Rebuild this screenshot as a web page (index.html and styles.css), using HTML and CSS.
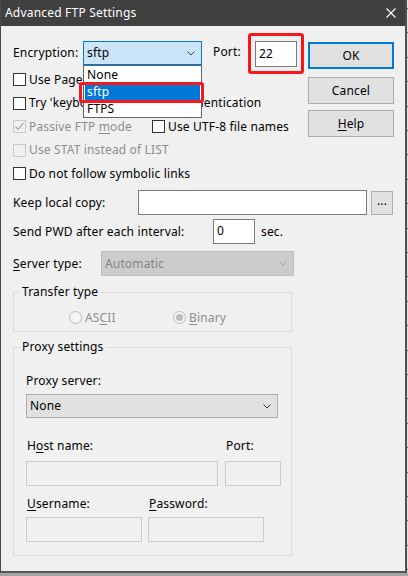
FILE: index.html
```html
<!DOCTYPE html>
<html>
<head>
<meta charset="utf-8">
<title>Advanced FTP Settings</title>
<link rel="stylesheet" href="styles.css">
</head>
<body>
<div class="screen">
  <div class="window">
    <div class="titlebar">
      <span class="title">Advanced FTP Settings</span>
      <svg class="close" width="10" height="10" viewBox="0 0 10 10"><path d="M0.5 0.5L9.5 9.5M9.5 0.5L0.5 9.5" stroke="#ffffff" stroke-width="1.1" fill="none"/></svg>
    </div>
    <div class="content">
      <div class="top">
        <div class="opts">
          <div class="row-first">
            <span class="lbl lbl-enc">Encryption:</span>
            <div class="combo combo-active">
              <span class="combo-text">sftp</span>
              <svg class="chev" width="8" height="5" viewBox="0 0 8 5"><path d="M0.5 0.5L4 4L7.5 0.5" stroke="#444" fill="none"/></svg>
              <ul class="dropdown">
                <li class="item">None</li>
                <li class="item item-sel">sftp</li>
                <li class="item">FTPS</li>
              </ul>
              <div class="mark mark-enc"></div>
            </div>
            <span class="lbl lbl-port">Port:</span>
            <div class="port-wrap">
              <div class="input input-port">22</div>
              <div class="mark mark-port"></div>
            </div>
          </div>
          <div class="cb-row"><span class="cb"></span><span class="cb-text">Use Pageant</span></div>
          <div class="cb-row"><span class="cb"></span><span class="cb-text">Try 'keyboard-interactive' authentication</span></div>
          <div class="cb-row">
            <span class="cb-item cb-item-wide">
              <span class="cb cb-dis"><svg width="11" height="11" viewBox="0 0 11 11"><path d="M1.5 5.5L4.2 8.3L9.5 2" stroke="#a8a8a8" stroke-width="1.2" fill="none"/></svg></span>
              <span class="cb-text dis">Passive FTP <u>m</u>ode</span>
            </span>
            <span class="cb-item">
              <span class="cb"></span>
              <span class="cb-text">Use UTF-8 file names</span>
            </span>
          </div>
          <div class="cb-row"><span class="cb cb-dis"></span><span class="cb-text dis">Use STAT instead of LIST</span></div>
          <div class="cb-row"><span class="cb"></span><span class="cb-text">Do not follow symbolic links</span></div>
        </div>
        <div class="buttons">
          <div class="btn btn-default">OK</div>
          <div class="btn btn-cancel">Cancel</div>
          <div class="btn btn-help"><u>H</u>elp</div>
        </div>
      </div>

      <div class="line line-keep">
        <span class="lbl lbl-keep">Keep local copy:</span>
        <div class="input input-keep"></div>
        <div class="btn-small">...</div>
      </div>

      <div class="line line-pwd">
        <span class="lbl lbl-pwd">Send PWD after each interval:</span>
        <div class="input input-pwd">0</div>
        <span class="sec">sec.</span>
      </div>

      <div class="line line-server">
        <span class="lbl lbl-server"><u>S</u>erver type:</span>
        <div class="combo combo-disabled">
          <span class="combo-text">Automatic</span>
          <svg class="chev" width="8" height="5" viewBox="0 0 8 5"><path d="M0.5 0.5L4 4L7.5 0.5" stroke="#a3a3a3" fill="none"/></svg>
        </div>
      </div>

      <div class="group group-transfer">
        <div class="legend">Transfer type</div>
        <div class="radios">
          <span class="radio-item"><span class="radio"></span><span class="dis">AS<u>C</u>II</span></span>
          <span class="radio-item"><span class="radio radio-on"><span class="dot"></span></span><span class="dis"><u>B</u>inary</span></span>
        </div>
      </div>

      <div class="group group-proxy">
        <div class="legend">Proxy settings</div>
        <div class="proxy-inner">
          <div class="plabel plabel-server">Proxy server:</div>
          <div class="combo combo-proxy">
            <span class="combo-text">None</span>
            <svg class="chev" width="8" height="5" viewBox="0 0 8 5"><path d="M0.5 0.5L4 4L7.5 0.5" stroke="#333" fill="none"/></svg>
          </div>
          <div class="pgrid pgrid-host">
            <span class="plabel">H<u>o</u>st name:</span>
            <span class="plabel">Port:</span>
            <div class="input input-dis"></div>
            <div class="input input-dis"></div>
          </div>
          <div class="pgrid pgrid-user">
            <span class="plabel"><u>U</u>sername:</span>
            <span class="plabel"><u>P</u>assword:</span>
            <div class="input input-dis"></div>
            <div class="input input-dis"></div>
          </div>
        </div>
      </div>
    </div>
  </div>
  <div class="edge"></div>
</div>
</body>
</html>
```
FILE: styles.css
```css
* { box-sizing: border-box; }

html, body {
  margin: 0;
  padding: 0;
}

body {
  width: 408px;
  height: 576px;
  overflow: hidden;
  background: #a4a4a4;
  font-family: "Noto Sans", "Liberation Sans", sans-serif;
  font-size: 12px;
  letter-spacing: 0.15px;
  color: #000;
}

u { text-underline-offset: 2px; text-decoration-thickness: 1px; }

.screen {
  display: flex;
  height: 573px;
}

.window {
  width: 405px;
  height: 573px;
  background: #f0f0f0;
  border-left: 1px solid #4a4a4a;
  border-bottom: 2px solid #565656;
  display: flex;
  flex-direction: column;
}

.edge {
  flex: 1;
  border-left: 2px solid #505050;
  background: repeating-linear-gradient(to bottom, #e2e2e2 0, #e2e2e2 8px, #5a5a5a 8px, #5a5a5a 9px, #e2e2e2 9px, #e2e2e2 24.4px);
}

.titlebar {
  height: 26px;
  background: #404040;
  display: flex;
  align-items: center;
  justify-content: space-between;
  padding: 0 9px 0 4px;
  color: #fff;
  flex-shrink: 0;
}

.title {
  font-size: 12px;
  letter-spacing: 0.2px;
  line-height: 16px;
}

.close { display: block; }

.content {
  padding: 15px 11px 0 12px;
  display: flex;
  flex-direction: column;
}

.top {
  display: flex;
  justify-content: space-between;
}

.row-first {
  display: flex;
  align-items: flex-start;
  height: 26px;
  margin-bottom: 1px;
}

.lbl { line-height: 16px; flex-shrink: 0; }
.lbl-enc { width: 70px; margin-top: 4px; }
.lbl-port { width: 42px; margin-left: 11px; margin-top: 3px; }

.combo {
  position: relative;
  display: flex;
  align-items: center;
  justify-content: space-between;
  padding: 0 6px 0 3px;
  line-height: 16px;
}

.combo-active {
  width: 119px;
  height: 24px;
  background: #cce4f7;
  border: 1px solid #0078d7;
}

.combo-disabled {
  width: 193px;
  height: 25px;
  background: #cccccc;
  border: 1px solid #bfbfbf;
  color: #838383;
}

.combo-proxy {
  width: 252px;
  height: 24px;
  background: #e1e1e1;
  border: 1px solid #adadad;
}

.chev { display: block; }

.dropdown {
  position: absolute;
  left: -1px;
  top: 23px;
  width: 119px;
  margin: 0;
  padding: 0;
  list-style: none;
  background: #fff;
  border: 1px solid #646464;
  z-index: 2;
}

.item {
  height: 17px;
  line-height: 17px;
  padding-left: 3px;
}

.item-sel {
  background: #0078d7;
  color: #fff;
  margin: 0 1px;
  padding-left: 2px;
}

.mark {
  position: absolute;
  border: 3px solid #f5191b;
  border-radius: 3px;
  z-index: 3;
}

.mark-enc {
  left: -5px;
  top: 40px;
  width: 125px;
  height: 21px;
}

.port-wrap { position: relative; }

.mark-port {
  left: -7px;
  top: -8px;
  width: 56px;
  height: 41px;
}

.input {
  background: #fff;
  border: 1px solid #7a7a7a;
  line-height: 16px;
  padding: 3px 0 0 3px;
}

.input-port { width: 42px; height: 26px; padding-top: 4px; }

.cb-row {
  height: 23.5px;
  display: flex;
  align-items: center;
}

.cb-item {
  display: flex;
  align-items: center;
}

.cb-item-wide { width: 139px; }

.cb {
  width: 13px;
  height: 13px;
  border: 1px solid #333;
  background: #fff;
  flex-shrink: 0;
  display: flex;
  align-items: center;
  justify-content: center;
}

.cb-dis {
  border-color: #cacaca;
  background: #f0f0f0;
}

.cb-text {
  margin-left: 3px;
  line-height: 16px;
  white-space: nowrap;
}

.dis { color: #8d8d8d; }

.buttons {
  display: flex;
  flex-direction: column;
  padding-top: 1px;
}

.btn {
  width: 86px;
  height: 27px;
  background: #e1e1e1;
  border: 1px solid #adadad;
  display: flex;
  align-items: center;
  justify-content: center;
  line-height: 16px;
}

.btn-default { border: 2px solid #0078d7; }
.btn-cancel { margin-top: 8px; }
.btn-help { margin-top: 6px; }

.line {
  display: flex;
  align-items: center;
}

.line-keep { margin-top: 4.5px; }
.lbl-keep { width: 125px; }
.input-keep { width: 229px; height: 25px; }

.btn-small {
  width: 22px;
  height: 24px;
  margin-left: 4px;
  background: #e1e1e1;
  border: 1px solid #adadad;
  display: flex;
  align-items: center;
  justify-content: center;
  line-height: 12px;
  padding-bottom: 3px;
}

.line-pwd { margin-top: 4px; }
.lbl-pwd { width: 200px; }
.input-pwd { width: 42px; height: 25px; }
.sec { margin-left: 6px; line-height: 16px; }

.line-server { margin-top: 7px; }
.lbl-server { width: 88px; }

.group {
  width: 279px;
  border: 1px solid #dcdcdc;
}

.group-transfer {
  margin-top: 16px;
  padding-bottom: 7px;
}

.legend {
  width: fit-content;
  margin: -9px 0 0 6px;
  padding: 0 2px;
  line-height: 16px;
  background: #f0f0f0;
}

.radios {
  display: flex;
  align-items: center;
  height: 13px;
  margin-top: 11px;
  padding-left: 55px;
  line-height: 16px;
}

.radio-item {
  display: flex;
  align-items: center;
  gap: 3px;
  width: 104px;
}

.radio {
  width: 13px;
  height: 13px;
  border-radius: 50%;
  border: 1px solid #bcbcbc;
  background: #f4f4f4;
  display: flex;
  align-items: center;
  justify-content: center;
}

.dot {
  width: 7px;
  height: 7px;
  border-radius: 50%;
  background: #bcbcbc;
}

.group-proxy {
  margin-top: 15px;
  padding-bottom: 13px;
}

.proxy-inner {
  padding: 0 12px;
  display: flex;
  flex-direction: column;
}

.plabel { line-height: 16px; }
.plabel-server { margin-top: 18px; margin-bottom: 5px; }

.pgrid {
  display: grid;
  row-gap: 7px;
}

.pgrid-host {
  margin-top: 20px;
  grid-template-columns: 192px 56px;
  column-gap: 7px;
}

.pgrid-user {
  margin-top: 10px;
  grid-template-columns: 116px 116px;
  column-gap: 6px;
  row-gap: 5px;
}

.pgrid .plabel { padding-left: 1px; }

.input-dis {
  height: 25px;
  background: #f0f0f0;
  border: 1px solid #cccccc;
}
```
